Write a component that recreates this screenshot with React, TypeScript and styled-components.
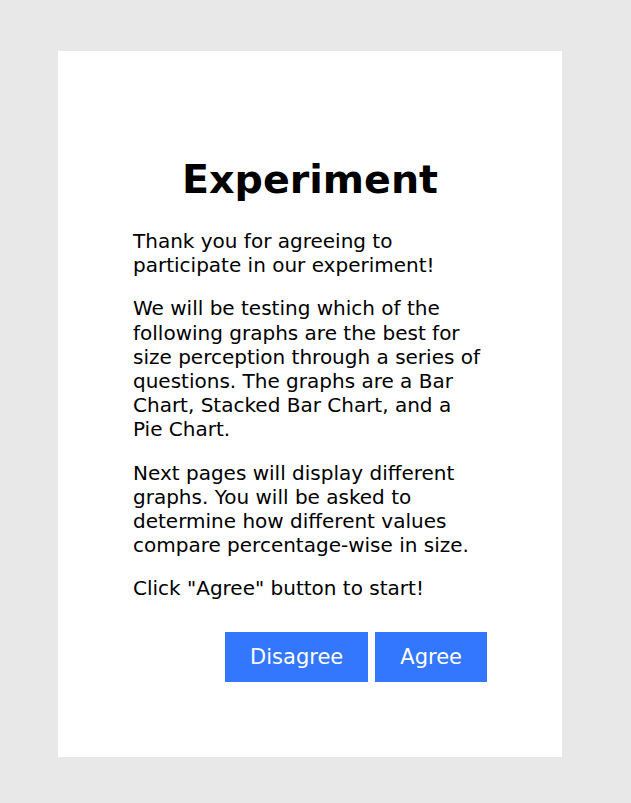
import { createGlobalStyle } from 'styled-components';
import styled from 'styled-components';

const GlobalStyle = createGlobalStyle`
  body {
    margin: 0;
    background: #e8e8e8;
    font-family: 'DejaVu Sans', Verdana, sans-serif;
  }
`;

const Page = styled.div`
  padding: 51px 69px 46px 58px;
`;

const Card = styled.main`
  box-sizing: border-box;
  width: 504px;
  background: #fff;
  padding: 75px;
  color: #000;
`;

const Title = styled.h1`
  font-size: 39.6px;
  font-weight: bold;
  text-align: center;
  margin: 0 0 27px;
  padding-top: 30px;
  line-height: normal;
`;

const Paragraph = styled.p`
  max-width: 350px;
  font-size: 20px;
  line-height: 24.2px;
  margin: 19px 0;
`;

const Actions = styled.div`
  display: flex;
  justify-content: flex-end;
  gap: 7px;
  margin-top: 31px;
`;

const Button = styled.button`
  height: 50px;
  padding: 0 25px;
  border: none;
  background: #3377ff;
  color: #fff;
  font-family: inherit;
  font-size: 21px;
  cursor: pointer;
`;

export default function App() {
  return (
    <>
      <GlobalStyle />
      <Page>
        <Card>
          <Title>Experiment</Title>
          <Paragraph>Thank you for agreeing to participate in our experiment!</Paragraph>
          <Paragraph>
            We will be testing which of the following graphs are the best for size perception
            through a series of questions. The graphs are a Bar Chart, Stacked Bar Chart, and a
            Pie Chart.
          </Paragraph>
          <Paragraph>
            Next pages will display different graphs. You will be asked to determine how different
            values compare percentage-wise in size.
          </Paragraph>
          <Paragraph>Click "Agree" button to start!</Paragraph>
          <Actions>
            <Button>Disagree</Button>
            <Button>Agree</Button>
          </Actions>
        </Card>
      </Page>
    </>
  );
}
